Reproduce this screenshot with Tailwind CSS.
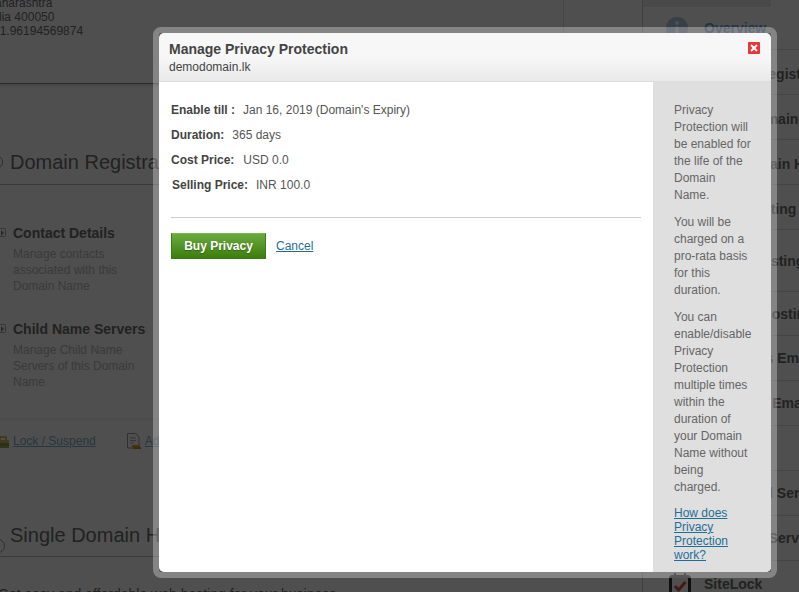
<!DOCTYPE html>
<html lang="en">
<head>
<meta charset="utf-8">
<title>Manage Privacy Protection</title>
<script src="https://cdn.jsdelivr.net/npm/@tailwindcss/browser@4"></script>
</head>
<body class="m-0 bg-white">
<div class="relative h-[592px] w-[799px] overflow-hidden bg-white font-['Liberation_Sans',Arial,sans-serif] text-[12px] text-[#6e6e6e]">

  <!-- page behind the dialog -->
  <div class="flex h-[592px] w-[799px]">
    <main class="h-[592px] w-[642px] shrink-0 overflow-hidden">
      <div class="-mt-[4px] flex h-[88px] border-b border-[#888] leading-[14px] shadow-[0_2px_3px_rgba(0,0,0,0.15)]">
        <div class="w-[563px] shrink-0">
          <p class="-ml-[15px] text-[12px]">Maharashtra</p>
          <p class="-ml-[15px] text-[12px]">India 400050</p>
          <p class="-ml-[14px] text-[12px]">+91.96194569874</p>
        </div>
        <div class="flex-1 border-l border-[#ddd]"></div>
      </div>
      <div class="mt-[65px] flex h-[36px] items-start border-b border-[#bbb]">
        <span class="-ml-[11px] mt-[6px] mr-[7px] block h-[14px] w-[14px] shrink-0 rounded-full border border-[#999]"></span>
        <h2 class="text-[20px] leading-[26px] whitespace-nowrap text-[#6e6e6e]">Domain Registration</h2>
      </div>
      <div class="h-[233px] bg-[#fdfdfd] pt-[40px] shadow-[0_2px_4px_rgba(0,0,0,0.08)]">
        <div class="flex">
          <span class="-ml-[1px] mt-[3px] mr-[7px] flex h-[9px] w-[7px] items-center justify-center rounded-r-[2px] border border-l-0 border-[#aaa]"><span class="border-y-[3px] border-l-[3px] border-y-transparent border-l-[#888]"></span></span>
          <div>
            <h3 class="text-[14px] leading-[16px] font-bold">Contact Details</h3>
            <p class="mt-[5px] w-[115px] leading-[16px] text-[#bcbcbc]">Manage contacts associated with this Domain Name</p>
          </div>
        </div>
        <div class="mt-[27px] flex">
          <span class="-ml-[1px] mt-[3px] mr-[7px] flex h-[9px] w-[7px] items-center justify-center rounded-r-[2px] border border-l-0 border-[#aaa]"><span class="border-y-[3px] border-l-[3px] border-y-transparent border-l-[#888]"></span></span>
          <div>
            <h3 class="text-[14px] leading-[16px] font-bold">Child Name Servers</h3>
            <p class="mt-[5px] w-[125px] leading-[16px] text-[#bcbcbc]">Manage Child Name Servers of this Domain Name</p>
          </div>
        </div>
      </div>
      <div class="mt-[15px] flex h-[16px] items-center whitespace-nowrap">
        <svg class="mr-[4px] shrink-0" width="9" height="15" viewBox="0 0 9 15"><path d="M0 6V3h6v3" fill="none" stroke="#c9a64a" stroke-width="1.5"/><rect x="0" y="6" width="9" height="3" fill="#e3b84e"/><rect x="0" y="9" width="9" height="3" fill="#6dab5c"/><rect x="0" y="12" width="9" height="2" fill="#c9974a"/></svg>
        <a href="#" class="text-[#7fb0d0] underline">Lock / Suspend</a>
        <svg class="mr-[4px] ml-[31px] shrink-0" width="14" height="16" viewBox="0 0 14 16"><path d="M.5.5h8l3.500 3.500v11H.5z" fill="#fff" stroke="#999"/><path d="M3 5h6M3 7.500h6M3 10h4" stroke="#aaa"/><rect x="5" y="12" width="8" height="2" fill="#d6a638"/><rect x="6" y="14" width="8" height="2" fill="#c9922c"/></svg>
        <a href="#" class="text-[#7fb0d0] underline">Add-ons</a>
      </div>
      <div class="mt-[73px] flex h-[35px] items-start border-b border-[#bbb]">
        <span class="-ml-[9px] mt-[17px] mr-[5px] block h-[14px] w-[14px] shrink-0 rounded-full border border-[#999]"></span>
        <h2 class="text-[20px] leading-[26px] whitespace-nowrap">Single Domain Hosting</h2>
      </div>
      <p class="mt-[27px] -ml-[2px] text-[14px] whitespace-nowrap">Get easy and affordable web hosting for your business</p>
    </main>

    <aside class="w-[157px] shrink-0 border-l border-[#ccc] text-[14px] leading-[16px] font-bold whitespace-nowrap">
      <div class="h-[7px] w-[128px] bg-[#ececec]"></div>
      <div class="flex h-[43px] items-center border-b border-[#ddd] pl-[23px]">
        <svg class="mr-[16px] shrink-0" width="22" height="22" viewBox="0 0 22 22"><circle cx="11" cy="11" r="11" fill="#b0cbe6"/><circle cx="11" cy="6" r="2" fill="#fff"/><rect x="9.500" y="9.500" width="3" height="8" fill="#fff"/></svg>
        <a href="#" class="text-[#6ea4db]">Overview</a>
      </div>
      <div class="flex h-[45px] items-center border-b border-[#ddd] pt-[3px] pl-[60px]">Domain Registration</div>
      <div class="flex h-[45px] items-center border-b border-[#ddd] pt-[3px] pl-[55px]">Renew Domain</div>
      <div class="flex h-[45px] items-center border-b border-[#ddd] pt-[3px] pl-[50px]">Single Domain Hosting</div>
      <div class="flex h-[45px] items-center border-b border-[#ddd] pt-[3px] pl-[60px]">Linux Hosting</div>
      <div class="flex h-[62px] items-center border-b border-[#ddd] pl-[68px]">Linux Hosting</div>
      <div class="flex h-[44px] items-center border-b border-[#ddd] pl-[75px]">Cloud Hosting</div>
      <div class="flex h-[45px] items-center border-b border-[#ddd] pl-[68px]">Business Email</div>
      <div class="flex h-[45px] items-center border-b border-[#ddd] pl-[56px]">Enterprise Email</div>
      <div class="flex h-[45px] items-center border-b border-[#ddd] pl-[62px]"></div>
      <div class="flex h-[45px] items-center border-b border-[#ddd] pl-[63px]">Dedicated Servers</div>
      <div class="flex h-[45px] items-center border-b border-[#ddd] pl-[61px]">Managed Servers</div>
      <div class="flex h-[45px] items-center pl-[26px]">
        <svg class="mr-[13px] shrink-0" width="22" height="22" viewBox="0 0 22 22"><rect x="1.500" y="3.500" width="19" height="17" rx="2" fill="#fff" stroke="#333" stroke-width="3"/><path d="M6 3V0M16 3V0" stroke="#333" stroke-width="2"/><path d="M6 13l3.500 4 7-8" fill="none" stroke="#d9534f" stroke-width="3"/></svg>
        <span>SiteLock</span>
      </div>
    </aside>
  </div>

  <!-- dim layer -->
  <div class="absolute inset-0 bg-black/[0.69]"></div>

  <!-- dialog -->
  <div role="dialog" class="absolute top-[27px] left-[153px] flex h-[551px] w-[624px] flex-col overflow-hidden rounded-[8px] border-[6px] border-white/30 bg-clip-padding">
    <header class="relative h-[49px] shrink-0 rounded-t-[5px] border-b border-[#ddd] bg-linear-to-b from-[#f7f7f7] from-50% to-[#e9e9e9] pt-[8px] pl-[10px]">
      <h1 class="text-[14px] leading-[16px] font-bold text-[#444]">Manage Privacy Protection</h1>
      <p class="mt-[3px] text-[12px] leading-[14px] text-[#444]">demodomain.lk</p>
      <button type="button" aria-label="Close" class="absolute top-[9px] right-[11px] block h-[12px] w-[12px]">
        <svg width="12" height="12" viewBox="0 0 12 12"><rect width="12" height="12" rx="1" fill="#e8353a"/><path d="M3 3l6 6M9 3l-6 6" stroke="#fff" stroke-width="2"/></svg>
      </button>
    </header>
    <div class="flex min-h-0 flex-1 overflow-hidden rounded-b-[5px] bg-white">
      <section class="w-[494px] shrink-0 pt-[21px] pr-[12px] pl-[12px] text-[#444]">
        <div class="flex flex-col gap-[11px] leading-[14px] whitespace-nowrap">
          <p><b class="mr-[8px]">Enable till :</b><span class="text-[#555]">Jan 16, 2019 (Domain's Expiry)</span></p>
          <p><b class="mr-[8px]">Duration:</b><span class="text-[#555]">365 days</span></p>
          <p><b class="mr-[9px]">Cost Price:</b><span class="text-[#555]">USD 0.0</span></p>
          <p class="pl-[1px]"><b class="mr-[8px]">Selling Price:</b><span class="text-[#555]">INR 100.0</span></p>
        </div>
        <hr class="mt-[25px] border-t border-[#ccc]">
        <div class="mt-[15px] flex items-center">
          <button type="button" class="h-[26px] w-[95px] border border-[#3d7a10] border-t-[#72b94a] bg-linear-to-b from-[#6bab3d] to-[#3c7d08] text-[12px] font-bold text-white [text-shadow:0_1px_1px_rgba(0,0,0,0.3)]">Buy Privacy</button>
          <a href="#" class="ml-[10px] text-[#1f6e96] underline">Cancel</a>
        </div>
      </section>
      <aside class="flex-1 bg-[#dfdfdf] pt-[20px] pr-[19px] pl-[21px] leading-[17px] text-[#666]">
        <p>Privacy Protection will be enabled for the life of the Domain Name.</p>
        <p class="mt-[10px]">You will be charged on a pro-rata basis for this duration.</p>
        <p class="mt-[10px]">You can enable/disable Privacy Protection multiple times within the duration of your Domain Name without being charged.</p>
        <p class="mt-[10px] leading-[14px]"><a href="#" class="text-[#1f6e96] underline">How does Privacy Protection work?</a></p>
      </aside>
    </div>
  </div>
</div>
</body>
</html>
